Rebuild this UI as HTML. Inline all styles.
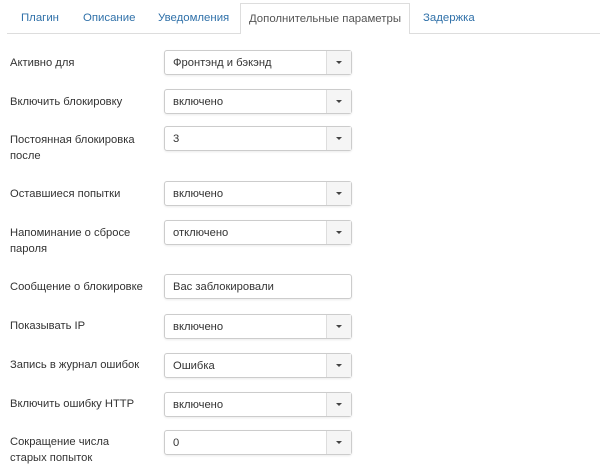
<!DOCTYPE html>
<html><head><meta charset="utf-8"><style>
body{margin:0;width:600px;height:473px;background:#fff;font-family:"Liberation Sans",Arial,sans-serif;font-size:11.2px;color:#333;position:relative;overflow:hidden}
div,span{white-space:nowrap}
.tabs{position:absolute;left:7px;top:33px;width:593px;border-top:1px solid #ddd}
.tab{position:absolute;top:12px;color:#3071a9;font-size:11.4px}
.active{position:absolute;left:240px;top:3px;width:170px;height:31px;border:1px solid #ddd;border-bottom:none;background:#fff;box-sizing:border-box;color:#555;font-size:11.4px;text-align:center;line-height:30px}
.lbl{position:absolute;left:10px;line-height:16px}
.sel{position:absolute;left:164px;width:188px;height:25px;border:1px solid #ccc;border-radius:3px;box-sizing:border-box;box-shadow:0 1px 2px rgba(0,0,0,.08);background:#fff}
.sel span{position:absolute;left:8px;top:6px}
.sel i{position:absolute;right:0;top:0;width:24px;height:23px;border-left:1px solid #ddd;background:#f5f5f5}
.sel i:after{content:"";position:absolute;left:9px;top:10px;border-left:3px solid transparent;border-right:3px solid transparent;border-top:3px solid #444}
</style></head><body>
<div class="tabs"></div>
<div class="tab" style="left:21px">Плагин</div>
<div class="tab" style="left:83px">Описание</div>
<div class="tab" style="left:158px">Уведомления</div>
<div class="active">Дополнительные параметры</div>
<div class="tab" style="left:423px">Задержка</div>

<div class="lbl" style="top:55px">Активно для</div>
<div class="sel" style="top:50px"><span>Фронтэнд и бэкэнд</span><i></i></div>
<div class="lbl" style="top:94px">Включить блокировку</div>
<div class="sel" style="top:89px"><span>включено</span><i></i></div>
<div class="lbl" style="top:132px">Постоянная блокировка<br>после</div>
<div class="sel" style="top:126px"><span>3</span><i></i></div>
<div class="lbl" style="top:186px">Оставшиеся попытки</div>
<div class="sel" style="top:181px"><span>включено</span><i></i></div>
<div class="lbl" style="top:225px">Напоминание о сбросе<br>пароля</div>
<div class="sel" style="top:220px"><span>отключено</span><i></i></div>
<div class="lbl" style="top:279px">Сообщение о блокировке</div>
<div class="sel" style="top:274px"><span>Вас заблокировали</span></div>
<div class="lbl" style="top:318px">Показывать IP</div>
<div class="sel" style="top:314px"><span>включено</span><i></i></div>
<div class="lbl" style="top:357px">Запись в журнал ошибок</div>
<div class="sel" style="top:353px"><span>Ошибка</span><i></i></div>
<div class="lbl" style="top:396px">Включить ошибку HTTP</div>
<div class="sel" style="top:392px"><span>включено</span><i></i></div>
<div class="lbl" style="top:434px">Сокращение числа<br>старых попыток</div>
<div class="sel" style="top:430px"><span>0</span><i></i></div>
</body></html>
